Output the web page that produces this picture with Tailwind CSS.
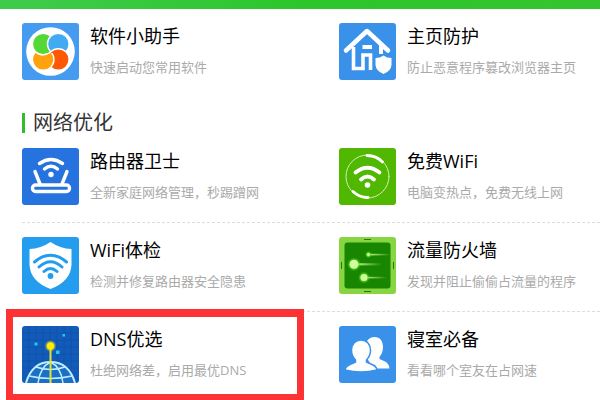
<!DOCTYPE html>
<html lang="zh-CN">
<head>
    <meta charset="UTF-8">
    <meta name="viewport" content="width=device-width, initial-scale=1.0">
    <title>网络优化</title>
    <script src="https://cdn.jsdelivr.net/npm/@tailwindcss/browser@4"></script>
</head>
<body class="bg-white min-h-screen overflow-hidden font-['Open_Sans','Noto_Sans_CJK_SC',sans-serif]">
<header class="h-[9px] bg-linear-to-r from-[#3fcb4b] via-[#2cc62b] to-[#35c42f]"></header>

<main class="pl-[22px]">
    <section class="grid grid-cols-[317fr_261fr] pt-[14px]">
        <article class="flex gap-[11px]">
            <svg class="size-[57px] shrink-0 rounded-[3px] bg-[#459bf0]" viewBox="0 0 57 57">
                <clipPath id="petal"><path d="M22 33 29 30H46V51H22Z"/></clipPath>
                <circle cx="28.500" cy="28.500" r="24.300" fill="#fff"/>
                <g stroke="#fff" stroke-width="1.400">
                    <circle cx="21.200" cy="36.500" r="10.800" fill="#ffa20d"/>
                    <circle cx="21.200" cy="21" r="10.800" fill="#55d736"/>
                    <circle cx="36.300" cy="21" r="10.800" fill="#42aaf2"/>
                    <circle cx="36.300" cy="36.500" r="10.800" fill="#fc5806"/>
                    <circle cx="21.200" cy="36.500" r="10.800" fill="#ffa20d" clip-path="url(#petal)"/>
                </g>
            </svg>
            <div>
                <h3 class="text-[18px] leading-[26px] text-black">软件小助手</h3>
                <p class="mt-1.5 text-[13px] leading-6 text-[#aaa]">快速启动您常用软件</p>
            </div>
        </article>
        <article class="flex gap-[11px]">
            <svg class="size-[57px] shrink-0 rounded-[3px] bg-[#3a91ea]" viewBox="0 0 57 57">
                <g fill="none" stroke="#fff" stroke-width="4">
                    <path d="M7 27.500 28 8 49 27.500" stroke-width="4.500" stroke-linecap="round" stroke-linejoin="round"/>
                    <path d="M14.500 24V45.500H24V32H31.500V47" stroke-width="3.600"/>
                    <path d="M42 22V31"/>
                    <path d="M23.500 24H33"/>
                </g>
                <path d="M44.500 32.500Q48 35 52.500 35V42Q52 48 44.500 51 37 48 36.500 42V35Q41 35 44.500 32.500Z" fill="#fff"/>
            </svg>
            <div>
                <h3 class="text-[18px] leading-[26px] text-black">主页防护</h3>
                <p class="mt-1.5 text-[13px] leading-6 text-[#aaa]">防止恶意程序篡改浏览器主页</p>
            </div>
        </article>
    </section>

    <h2 class="mt-[33px] mb-[15px] flex h-5 items-center border-l-[3px] border-[#2fbf2b] pl-2 text-[20px] text-[#333]">网络优化</h2>

    <section class="grid grid-cols-[317fr_261fr] border-b border-dashed border-[#ddd] pb-[17px]">
        <article class="flex gap-[11px]">
            <svg class="size-[57px] shrink-0 rounded-[3px] bg-[#2673df]" viewBox="0 0 57 57">
                <g fill="none" stroke="#fff" stroke-width="3.400" stroke-linecap="round">
                    <rect x="10.500" y="37" width="37" height="6.500" rx="3"/>
                    <path d="M13 23.500 18 36M45 23.500 40 36"/>
                    <path d="M17.500 15.500Q29 7.500 40.500 15.500M22.500 21Q29 15.500 35.500 21"/>
                </g>
                <circle cx="29" cy="26.500" r="2.700" fill="#fff"/>
            </svg>
            <div>
                <h3 class="text-[18px] leading-[26px] text-black">路由器卫士</h3>
                <p class="mt-1.5 text-[13px] leading-6 text-[#aaa]">全新家庭网络管理，秒踢蹭网</p>
            </div>
        </article>
        <article class="flex gap-[11px]">
            <svg class="size-[57px] shrink-0 rounded-[3px] bg-[#50b800]" viewBox="0 0 57 57">
                <g fill="none" stroke="#fff" stroke-linecap="round">
                    <circle cx="28.500" cy="28.500" r="21.500" stroke="#d3efbb"/>
                    <path d="M28 7.500A21 21 0 0 1 43.500 14M14 43.500A21 21 0 0 0 29 49.500" stroke-width="2.800"/>
                    <path d="M16.500 24.500Q28.500 15 40.500 24.500M22 31.500Q28.500 25.500 35 31.500" stroke-width="3.800"/>
                </g>
                <circle cx="28.500" cy="37" r="2.800" fill="#fff"/>
            </svg>
            <div>
                <h3 class="text-[18px] leading-[26px] text-black">免费WiFi</h3>
                <p class="mt-1.5 text-[13px] leading-6 text-[#aaa]">电脑变热点，免费无线上网</p>
            </div>
        </article>
    </section>

    <section class="grid grid-cols-[317fr_261fr] border-b border-dashed border-[#ddd] pt-[14px] pb-[17px]">
        <article class="flex gap-[11px]">
            <svg class="size-[57px] shrink-0 rounded-[3px] bg-[#249dee]" viewBox="0 0 57 57">
                <path d="M28.500 5Q38 11.500 49.500 12V28Q48.500 44.500 28.500 52 8.500 44.500 7.500 28V12Q19 11.500 28.500 5Z" fill="#fff"/>
                <g fill="none" stroke="#249dee" stroke-width="3" stroke-linecap="round">
                    <path d="M12.500 25Q28.500 11.500 44.500 25M17 30Q28.500 19.500 40 30M22 34.500Q28.500 28.500 35 34.500"/>
                </g>
                <circle cx="28.500" cy="39" r="2.900" fill="#249dee"/>
            </svg>
            <div>
                <h3 class="text-[18px] leading-[26px] text-black">WiFi体检</h3>
                <p class="mt-1.5 text-[13px] leading-6 text-[#aaa]">检测并修复路由器安全隐患</p>
            </div>
        </article>
        <article class="flex gap-[11px]">
            <svg class="size-[57px] shrink-0 rounded-[3px] bg-[#86d541]" viewBox="0 0 57 57">
                <defs>
                    <linearGradient id="trail"><stop stop-color="#c7ff91"/><stop offset="1" stop-color="#c7ff91" stop-opacity="0"/></linearGradient>
                    <radialGradient id="glow"><stop offset=".5" stop-color="#54d81c"/><stop offset="1" stop-color="#54d81c" stop-opacity="0"/></radialGradient>
                </defs>
                <rect x="5.500" y="5.500" width="46" height="46" rx="3" fill="#188600"/>
                <path d="M25 2.500H32M25 54.500H32M2.500 25V32M54.500 25V32" stroke="#267611"/>
                <g fill="url(#trail)">
                    <rect x="15" y="26.200" width="28" height="2.200"/>
                    <rect x="25" y="39.800" width="23" height="1.600"/>
                    <rect x="29.500" y="16.800" width="22" height="1.600"/>
                </g>
                <g fill="url(#glow)">
                    <circle cx="15" cy="27.300" r="7"/>
                    <circle cx="25" cy="40.600" r="6"/>
                    <circle cx="29.500" cy="17.600" r="3.500"/>
                </g>
                <g fill="#d0ff9d">
                    <circle cx="15" cy="27.300" r="4.500"/>
                    <circle cx="25" cy="40.600" r="3.500"/>
                    <circle cx="29.500" cy="17.600" r="1.500"/>
                </g>
            </svg>
            <div>
                <h3 class="text-[18px] leading-[26px] text-black">流量防火墙</h3>
                <p class="mt-1.5 text-[13px] leading-6 text-[#aaa]">发现并阻止偷偷占流量的程序</p>
            </div>
        </article>
    </section>

    <section class="grid grid-cols-[317fr_261fr] pt-[14px]">
        <article class="relative flex gap-[11px]">
            <!-- highlight frame -->
            <div class="absolute -top-[17px] right-[35px] -left-4 h-[92px] border-[7px] border-t-8 border-[#fd3234]"></div>
            <svg class="size-[57px] shrink-0 rounded-[3px] bg-[#125bb9]" viewBox="0 0 57 57">
                <defs>
                    <radialGradient id="node"><stop offset=".4" stop-color="#ffe800"/><stop offset="1" stop-color="#ffe800" stop-opacity="0"/></radialGradient>
                </defs>
                <path d="M0 7H57M0 14H57M0 21H57M0 28H57M0 35H57M0 42H57M7 0V57M14 0V57M21 0V57M28 0V57M35 0V57M42 0V57M49 0V57" stroke="#0f53ab"/>
                <path d="M4 57Q9 36 28.500 36T53 57Z" fill="#1b6fc4"/>
                <g fill="none" stroke="#c0ecff" stroke-width="1.500">
                    <path d="M4 57C8 43 17 36 28.500 36S49 43 53 57" stroke-width="2"/>
                    <path d="M16 57Q18 41 28.500 36 39 41 41 57"/>
                    <path d="M14 41Q28.500 46 43 41M7 50Q28.500 55 50 50"/>
                </g>
                <g fill="#1ccbf0">
                    <rect x="12.500" y="16.500" width="3" height="3"/>
                    <rect x="40.500" y="8" width="2.500" height="2.500"/>
                    <rect x="34" y="24.500" width="3.500" height="3.500"/>
                </g>
                <path d="M28.500 20V57" stroke="#dde338" stroke-width="2"/>
                <circle cx="28.500" cy="20" r="6" fill="url(#node)"/>
                <circle cx="28.500" cy="20" r="3.500" fill="#fff000"/>
            </svg>
            <div>
                <h3 class="text-[18px] leading-[26px] text-black">DNS优选</h3>
                <p class="mt-1.5 text-[13px] leading-6 text-[#aaa]">杜绝网络差，启用最优DNS</p>
            </div>
        </article>
        <article class="flex gap-[11px]">
            <svg class="size-[57px] shrink-0 rounded-[3px] bg-[#3a91ea]" viewBox="0 0 57 57">
                <path d="M35.500 11C41 11 44 15 44 21 44 26 42 29 40.500 31V33C45 35 50 36 50.500 42.500H34L28 32V15Q31 11 35.500 11Z" fill="#fff"/>
                <path d="M22 14C28 14 31.500 18.500 31.500 24.500 31.500 29 29.500 32 27.500 34V36C32 38.500 37.500 38.500 38 44Q30 46 22 46T6 44C6.500 38.500 12 38.500 16.500 36V34C14.500 32 12.500 29 12.500 24.500 12.500 18.500 16 14 22 14Z" fill="#fff" stroke="#3a91ea" stroke-width="1.500"/>
            </svg>
            <div>
                <h3 class="text-[18px] leading-[26px] text-black">寝室必备</h3>
                <p class="mt-1.5 text-[13px] leading-6 text-[#aaa]">看看哪个室友在占网速</p>
            </div>
        </article>
    </section>
</main>
</body>
</html>
